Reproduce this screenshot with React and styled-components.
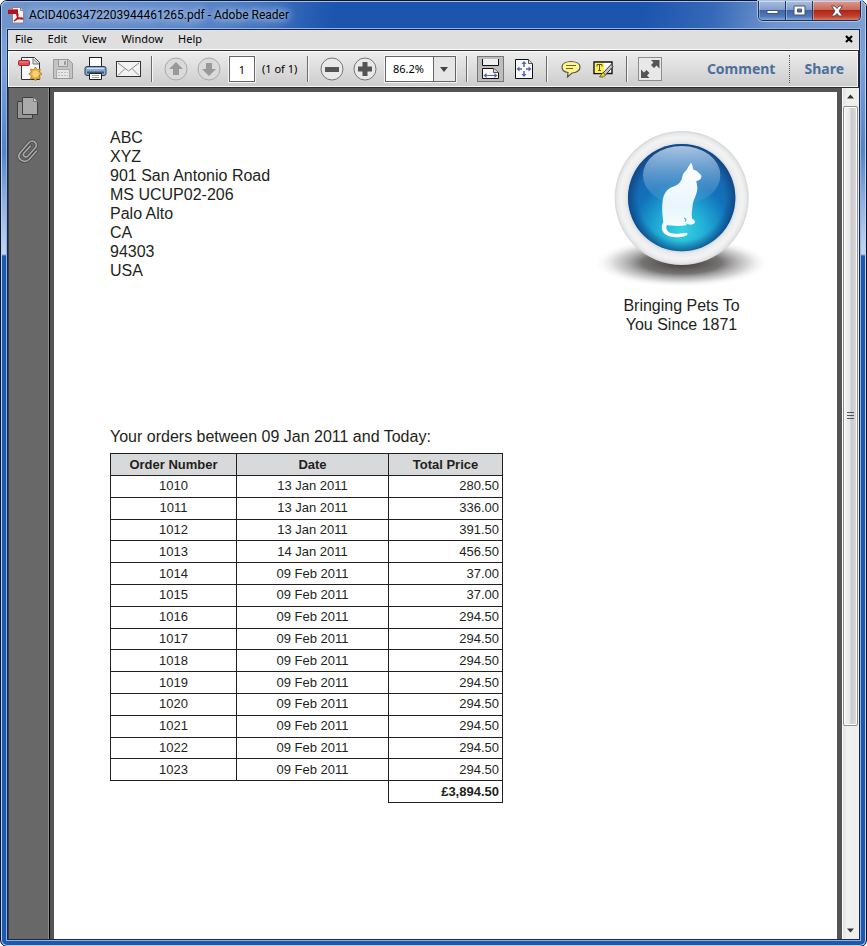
import React from "react";
import styled, { createGlobalStyle } from "styled-components";

const uiFont = `"Noto Sans", "Open Sans", sans-serif`;
const docFont = `"Liberation Sans", Arial, sans-serif`;

const GlobalStyle = createGlobalStyle`
  *, *::before, *::after { box-sizing: border-box; }
  body { margin: 0; background: #fff; }
  button, input, select { font: inherit; color: inherit; margin: 0; }
`;

const Frame = styled.div`
  display: flex;
  flex-direction: column;
  min-height: 100vh;
  padding: 0 6px 6px;
  border: 1px solid #07152e;
  border-radius: 7px;
  box-shadow: inset 0 0 0 1px #b9d2f2;
  font: 11px/20px ${uiFont};
  color: #000;
  background: linear-gradient(
    #6d93cd 0, #7ea3dc 60px, #5583c9 150px, #8fb0e0 200px, #c3d6f2 253px, #1c57b0 255px, #1c57b0 100%
  );
`;

const TitleBar = styled.header`
  display: flex;
  align-items: center;
  height: 28px;
  margin: 0 -6px;
  padding-left: 7px;
  border-radius: 6px 6px 0 0;
  box-shadow: inset 0 1px 0 #9fc0ee, inset 1px 0 0 #a9c6ee, inset -1px 0 0 #a9c6ee;
  background: linear-gradient(100deg, #7295cb 0, #5e88c8 190px, #3c6dba 270px, #1b55ae 330px, #1b55ae 74%, #3568b8 82%, #6f94cc 89%, #7f9fd2 100%);
`;

const WindowTitle = styled.h1`
  flex: 1;
  margin: 0;
  padding-left: 4px;
  font-family: Roboto, sans-serif;
  font-size: 12px;
  font-weight: 400;
  line-height: 20px;
  white-space: nowrap;
  text-shadow: 0 0 5px #a3bfe8, 0 0 9px #a3bfe8, 0 0 12px #a3bfe8, 0 0 16px #a3bfe8;
`;

const WindowControls = styled.div`
  display: flex;
  align-self: flex-start;
  margin-right: 5px;
  height: 20px;
  border: 1px solid #1b2f58;
  border-top: 0;
  border-radius: 0 0 5px 5px;
  box-shadow: 0 0 0 1px #a8c1e6;
  overflow: hidden;
`;

const ControlButton = styled.button`
  display: grid;
  place-items: center;
  width: ${(p) => (p.$close ? 47 : 27)}px;
  padding: 0;
  border: 0;
  border-right: ${(p) => (p.$close ? "0" : "1px solid #243c69")};
  box-shadow: inset 1px 0 0 #ffffff55, inset 0 1px 0 #ffffff77;
  background: ${(p) =>
    p.$close
      ? "linear-gradient(#dc9c90 0, #c9695a 45%, #ad2413 50%, #c0412d 80%, #d27a62 100%)"
      : "linear-gradient(#a9bfe0 0, #839fcd 45%, #3f65a6 50%, #5078b6 80%, #7fa5da 100%)"};
`;

const Client = styled.div`
  flex: 1;
  display: flex;
  flex-direction: column;
  border: 1px solid #16294d;
  box-shadow: 0 0 0 1px #8fb3e4;
  background: #686868;
`;

const MenuBar = styled.nav`
  display: flex;
  align-items: flex-start;
  height: 20px;
  padding-left: 2px;
  border-bottom: 1px solid #fff;
  background: #dfdfdf;
`;

const MenuItem = styled.button`
  height: 18px;
  padding: 0 5px;
  margin-right: 5px;
  border: 0;
  background: none;
  line-height: 18px;
`;

const CloseDoc = styled(MenuItem)`
  display: grid;
  place-items: center;
  margin-left: auto;
  margin-right: 1px;
`;

const Toolbar = styled.div`
  display: flex;
  align-items: center;
  height: 38px;
  padding-left: 5px;
  border: 1px solid #2b2b2b;
  border-left: 0;
  box-shadow: inset 0 1px 0 #fff, inset 1px 0 0 #fff, inset 0 -1px 0 #f4f4f4, inset -1px 0 0 #f4f4f4;
  background: linear-gradient(#ededed, #cccccc);
`;

const ToolButton = styled.button`
  display: grid;
  place-items: center;
  flex: none;
  width: 33px;
  height: 28px;
  padding: 0;
  border: 0;
  background: none;
`;

const Separator = styled.span`
  flex: none;
  width: 2px;
  height: 26px;
  margin: 0 6px;
  border-left: 1px solid #6b6b6b;
  border-right: 1px solid #f7f7f7;
`;

const PageInput = styled.input`
  width: 26px;
  height: 26px;
  margin: 0 0 0 4px;
  padding: 0;
  border: 1px solid #666;
  outline: 1px solid #f4f4f4;
  background: #fff;
  text-align: center;
`;

const PageCount = styled.span`
  width: 46px;
  padding-left: 7px;
  white-space: nowrap;
`;

const ZoomBox = styled.label`
  display: grid;
  grid-template-columns: 47px 22px;
  flex: none;
  height: 26px;
  margin: 0 4px;
  border: 1px solid #666;
  outline: 1px solid #f4f4f4;
  background: linear-gradient(90deg, #fff 47px, #666 47px, #666 48px, #e6e6e6 48px);
  & > * { grid-row: 1; }
`;

const ZoomSelect = styled.select`
  grid-column: 1 / 3;
  appearance: none;
  width: 69px;
  padding: 0 0 0 7px;
  border: 0;
  background: none;
`;

const ZoomArrow = styled.svg`
  grid-column: 2;
  place-self: center;
  pointer-events: none;
`;

const Actions = styled.div`
  display: flex;
  align-items: center;
  margin-left: auto;
`;

const ActionButton = styled.button`
  height: 28px;
  padding: 0 14px;
  border: 0;
  border-left: ${(p) => (p.$last ? "1px dotted #555" : "0")};
  background: none;
  color: #4c6f9c;
  font-size: 14px;
  font-weight: 700;
`;

const Workspace = styled.div`
  flex: 1;
  display: flex;
  background: #545454;
`;

const Sidebar = styled.aside`
  display: flex;
  flex-direction: column;
  align-items: center;
  gap: 15px;
  width: 42px;
  padding-top: 6px;
  padding-right: 2px;
  border-left: 1px solid #3e3e3e;
  border-right: 1px solid #000;
  box-shadow: inset -1px 0 0 #8c8c8c;
  background: #686868;
`;

const Page = styled.main`
  flex: 1;
  margin: 4px 5px 0 4px;
  padding: 28px 64px 136px 56px;
  background: #fff;
  color: #231f20;
  font: 16px/19px ${docFont};
`;

const Letterhead = styled.div`
  display: flex;
  justify-content: space-between;
  align-items: flex-start;
`;

const Address = styled.address`
  padding-top: 8px;
  font-style: normal;
  white-space: pre-line;
`;

const Brand = styled.figure`
  width: 183px;
  margin: 0;
  text-align: center;
  svg { display: block; }
`;

const Tagline = styled.figcaption`
  padding: 9px 24px 0;
`;

const Intro = styled.p`
  margin: 93px 0 7px;
`;

const OrderTable = styled.table`
  width: 393px;
  height: 350px;
  border-collapse: collapse;
  font-size: 13px;
  line-height: 15px;
`;

const Cell = styled.td`
  height: ${(p) => (p.$head ? "22px" : "auto")};
  padding: 0 3px 1px;
  width: ${(p) => p.$width || "auto"};
  border: 1px solid #231f20;
  text-align: ${(p) => p.$align || "center"};
  font-weight: ${(p) => (p.$bold ? 700 : 400)};
  background: ${(p) => (p.$head ? "#d8d9db" : "none")};
`;

const Blank = styled.td`
  padding: 0;
`;

const ScrollBar = styled.div`
  display: flex;
  flex-direction: column;
  width: 17px;
  border-left: 1px solid #fff;
  background: linear-gradient(90deg, #e3e3e3, #f0f0f0 4px, #eee);
`;

const ScrollButton = styled.button`
  display: grid;
  place-items: center;
  height: 17px;
  padding: 0;
  border: 0;
  background: none;
`;

const Track = styled.div`
  flex: 1;
  display: grid;
  grid-template-rows: 76fr 24fr;
`;

const Thumb = styled.div`
  display: grid;
  place-items: center;
  margin: 1px 1px 0 0;
  border: 1px solid #8f8f8f;
  border-radius: 2px;
  box-shadow: inset 0 0 0 1px #fafafa;
  background: linear-gradient(90deg, #f5f5f5, #e6e6e6 45%, #c9c9cc 55%, #dedee0);
`;

const PdfIcon = () => (
  <svg width="17" height="17" viewBox="0 0 17 17">
    <path d="M4.500 .5h8l3 3v12.500h-11z" fill="#f4f2f2" stroke="#8d8590" />
    <path d="M12.500.5v3h3" fill="#ccc" stroke="#8d8590" />
    <path d="M0 2h10v5H0z" fill="#b3131c" />
    <path d="M0 2h10v1H0z" fill="#d6575c" />
    <path d="M6 14c2-1 4-4 4-6.500 0-1-1.500-1-1.200.3.500 2.500 3 4.200 5.500 4.200 1 0 .5-1-.8-1-2.500 0-5 .8-7.500 3z" fill="none" stroke="#b9131d" strokeWidth="1.300" />
  </svg>
);

const MinimizeIcon = () => (
  <svg width="13" height="8" viewBox="0 0 13 8"><path d="M1 3.500h11v3H1z" fill="#fff" stroke="#47536b" /></svg>
);
const MaximizeIcon = () => (
  <svg width="13" height="11" viewBox="0 0 13 11"><path d="M1 1h11v9H1zM4.500 4v3h4V4z" fill="#fff" fillRule="evenodd" stroke="#47536b" /></svg>
);
const CloseIcon = () => (
  <svg width="14" height="12" viewBox="0 0 14 12"><path d="M1.500 1h3.500l2 2.500L9 1h3.500L9 6l3.500 5H9L7 8.500 5 11H1.500L5 6z" fill="#fff" stroke="#5b4d55" /></svg>
);

const CreatePdfIcon = () => (
  <svg width="24" height="24" viewBox="0 0 24 24">
    <path d="M3.500 .5h13l5 5V22.500H3.500z" fill="#fafafa" stroke="#333" />
    <path d="M15 1.500v5.500h6M15 1.500l6 6" fill="#ddd" stroke="#777" />
    <rect x=".5" y="3.500" width="11" height="5" rx="1" fill="#e64a50" stroke="#a52930" />
    <path d="M1.500 5h9" stroke="#f28d8f" />
    <path d="M17.500 10l1.800 2.700 3-.7-.7 3 2.400 2-2.500 1.500.7 3.200-3.200-.6-1.500 2.700-1.800-2.600-3 .7.600-3.200-2.600-1.800 2.500-1.800-.6-3 3.200.6z" fill="#efb240" stroke="#a97820" strokeWidth=".8" />
    <circle cx="17.500" cy="17" r="3" fill="#ffd779" />
  </svg>
);
const SaveIcon = () => (
  <svg width="22" height="22" viewBox="0 0 22 22" fill="#c4c4c4" stroke="#999">
    <path d="M1.500 1.500h15l4 4v15h-19z" />
    <path d="M6.500 2v6.500h9V2" fill="#dadada" /><path d="M12.500 3.500h1v3h-1z" fill="#999" />
    <path d="M4.500 20v-8.500h13V20" fill="#e6e6e6" stroke="#aaa" /><path d="M6 14.500h10M6 17.500h10" strokeDasharray="2 1" stroke="#bbb" />
  </svg>
);
const PrintIcon = () => (
  <svg width="23" height="24" viewBox="0 0 23 24">
    <rect x="5.500" y=".5" width="12" height="11" fill="#fff" stroke="#222" />
    <rect x="1" y="9.500" width="21" height="9" rx="2" fill="#86aad0" stroke="#2e4055" />
    <path d="M3 11.500h17" stroke="#d3e4f4" /><path d="M3 15.500h17" stroke="#3d5774" strokeWidth="2" />
    <path d="M5.500 16.500h12v6h-12z" fill="#fff" stroke="#222" /><path d="M8 18.500h7M8 20.500h7" stroke="#9aa" />
  </svg>
);
const MailIcon = () => (
  <svg width="25" height="18" viewBox="0 0 25 18">
    <rect x=".5" y="1.500" width="24" height="15" fill="#f2f2f2" stroke="#333" />
    <path d="M2 3l10.500 8L23 3M2 15.500l7-7M23 15.500l-7-7" fill="none" stroke="#8b8b8b" />
  </svg>
);
const CircleIcon = ({ d, active }) => (
  <svg width="24" height="24" viewBox="0 0 24 24">
    <circle cx="12" cy="12" r="11" fill={active ? "#e9e9e9" : "#dadada"} stroke={active ? "#777" : "#a9a9a9"} />
    <path d={d} fill={active ? "#555" : "#999"} />
  </svg>
);
const FitWidthIcon = () => (
  <svg width="27" height="26" viewBox="0 0 27 26">
    <rect x=".5" y=".5" width="26" height="25" fill="#bdbdbd" stroke="#777" />
    <path d="M5.500 3v6.500h16V3" fill="#f0f0f0" stroke="#111" />
    <path d="M5.500 22.500v-10h11l5 4v6z" fill="#f8f8f8" stroke="#111" />
    <path d="M16.500 12.500v4h5" fill="#ddd" stroke="#555" />
    <path d="M9 19.500h9" stroke="#5367a8" /><path d="M6.500 19.500l3-2.500v5zM20.500 19.500l-3-2.500v5z" fill="#5367a8" />
  </svg>
);
const FitPageIcon = () => (
  <svg width="18" height="20" viewBox="0 0 18 20">
    <path d="M.5.5h13l4 4v15H.5z" fill="#f7f7f7" stroke="#111" /><path d="M13.500.5v4h4" fill="#ddd" stroke="#555" />
    <path d="M9 5v3M9 12v3M4 10h3M11 10h3" stroke="#5367a8" strokeWidth="1.500" />
    <path d="M9 2l2.500 3h-5zM9 18l2.500-3h-5zM1.500 10l3-2.500v5zM16.500 10l-3-2.500v5z" fill="#5367a8" />
  </svg>
);
const NoteIcon = () => (
  <svg width="20" height="18" viewBox="0 0 20 18">
    <path d="M10 1.500c5 0 9 2 9 5.500s-3.500 6-8 6l-4.500 4 .5-4.500C3 12 1 10 1 7c0-3.500 4-5.500 9-5.500z" fill="#fff58a" stroke="#555" strokeWidth="1.200" />
    <path d="M5 5.500h10M5 8.500h7" stroke="#6b6534" />
  </svg>
);
const HighlightIcon = () => (
  <svg width="21" height="19" viewBox="0 0 21 19">
    <path d="M1 2h18v11.500H1z" fill="#fff" stroke="#111" strokeWidth="1.400" /><path d="M2 3h9v10H2z" fill="#fff250" />
    <path d="M4 6.500V4.500h5v2M6.500 5v6M5 10.500h3" fill="none" stroke="#5c561c" />
    <path d="M18 4.500l2 2-7.500 8.500-2.500-2z" fill="#c4c4c4" stroke="#333" /><path d="M10 12.500l2.500 2.500-2 2H6.500z" fill="#ebd934" stroke="#6b641c" />
  </svg>
);
const ExpandIcon = () => (
  <svg width="25" height="24" viewBox="0 0 25 24">
    <rect x=".5" y=".5" width="23" height="23" fill="#e8e8e8" stroke="#8d8d8d" />
    <path d="M21.500 3v8.500l-3-3L16 11l-3-3 2.500-2.500L13 3zM3 21v-8.500l3 3L8.500 13l3 3L9 18.500l2.500 2.500z" fill="#555" />
  </svg>
);
const PagesIcon = () => (
  <svg width="22" height="24" viewBox="0 0 22 24" fill="#aaa" stroke="#3f3f3f">
    <path d="M.5 5.500h15v17H.5z" fill="#969696" /><path d="M5.500 1.500h11l4 4v13h-15z" /><path d="M16.500 1.500v4h4" fill="#d5d5d5" stroke="#777" />
  </svg>
);
const ClipIcon = () => (
  <svg width="22" height="24" viewBox="0 0 22 24" fill="none" strokeLinecap="round">
    <path d="M19.500 12l-7.500 8.500c-5 4.500-13-.5-9-6.500L12 3.500c3.500-3.500 9.500.5 6.500 5l-7.500 8.500c-2.500 2.500-6-.5-4-3l6.500-7" stroke="#444" strokeWidth="3" />
    <path d="M19.500 12l-7.500 8.500c-5 4.500-13-.5-9-6.500L12 3.500c3.500-3.500 9.500.5 6.500 5l-7.500 8.500c-2.500 2.500-6-.5-4-3l6.500-7" stroke="#aaa" strokeWidth="1.600" />
  </svg>
);

const CatLogo = () => (
  <svg width="183" height="167" viewBox="0 0 549 501" role="img" aria-label="White cat on a blue button">
    <defs>
      <radialGradient id="shadow">
        <stop offset="0" stopColor="#3c3838" /><stop offset=".45" stopColor="#5f5b5b" stopOpacity=".85" />
        <stop offset=".75" stopColor="#999" stopOpacity=".4" /><stop offset="1" stopColor="#fff" stopOpacity="0" />
      </radialGradient>
      <radialGradient id="ring">
        <stop offset=".79" stopColor="#d3d6d9" /><stop offset=".84" stopColor="#ebeced" /><stop offset=".91" stopColor="#f3f3f4" /><stop offset=".97" stopColor="#e6e7e8" /><stop offset="1" stopColor="#d3d4d5" />
      </radialGradient>
      <radialGradient id="ball" cx=".5" cy=".8" r=".75">
        <stop offset="0" stopColor="#36d3e4" /><stop offset=".28" stopColor="#22b0d8" /><stop offset=".6" stopColor="#1173ba" /><stop offset="1" stopColor="#1c5fa6" />
      </radialGradient>
      <radialGradient id="edge">
        <stop offset=".8" stopColor="#0c3d7c" stopOpacity="0" /><stop offset="1" stopColor="#0c3774" stopOpacity=".65" />
      </radialGradient>
      <linearGradient id="gloss" x1="0" y1="0" x2="0" y2="1">
        <stop offset="0" stopColor="#c4daf0" stopOpacity=".85" /><stop offset="1" stopColor="#6ba3d8" stopOpacity=".15" />
      </linearGradient>
      <linearGradient id="fur" x1="0" y1="0" x2="0" y2="1">
        <stop offset="0" stopColor="#fff" /><stop offset=".6" stopColor="#e8f6fd" /><stop offset="1" stopColor="#fff" />
      </linearGradient>
    </defs>
    <ellipse cx="275" cy="428" rx="265" ry="74" fill="url(#shadow)" />
    <circle cx="275" cy="234" r="201" fill="url(#ring)" />
    <circle cx="275" cy="233" r="161" fill="url(#ball)" />
    <circle cx="275" cy="233" r="161" fill="url(#edge)" />
    <ellipse cx="275" cy="166" rx="116" ry="88" fill="url(#gloss)" />
    <path d="M303 128C308 134 308 142 310 149C318 151 324 154 327 160L334 166C335 172 333 178 327 181L319 183C320 193 324 203 321 214C318 228 310 240 308 255L305 282L306 296C313 298 317 303 314 310C307 316 295 315 290 310L289 316C268 319 246 318 231 315C226 324 231 335 242 339C258 344 276 339 291 338C294 342 291 346 287 347C266 354 240 353 226 343C213 333 213 319 220 307C217 286 215 264 218 241C221 221 231 207 247 201C260 197 270 191 275 178C277 168 279 160 286 154C292 149 296 137 303 128Z" fill="url(#fur)" />
    <path d="M282 294l6 3-2 8" fill="none" stroke="#2fb1cb" strokeWidth="3" />
  </svg>
);

const addressText = `ABC
XYZ
901 San Antonio Road
MS UCUP02-206
Palo Alto
CA
94303
USA`;

const orders = [
  ["1010", "13 Jan 2011", "280.50"],
  ["1011", "13 Jan 2011", "336.00"],
  ["1012", "13 Jan 2011", "391.50"],
  ["1013", "14 Jan 2011", "456.50"],
  ["1014", "09 Feb 2011", "37.00"],
  ["1015", "09 Feb 2011", "37.00"],
  ["1016", "09 Feb 2011", "294.50"],
  ["1017", "09 Feb 2011", "294.50"],
  ["1018", "09 Feb 2011", "294.50"],
  ["1019", "09 Feb 2011", "294.50"],
  ["1020", "09 Feb 2011", "294.50"],
  ["1021", "09 Feb 2011", "294.50"],
  ["1022", "09 Feb 2011", "294.50"],
  ["1023", "09 Feb 2011", "294.50"],
];

export default function App() {
  return (
    <>
      <GlobalStyle />
      <Frame>
        <TitleBar>
          <PdfIcon />
          <WindowTitle>ACID4063472203944461265.pdf - Adobe Reader</WindowTitle>
          <WindowControls>
            <ControlButton aria-label="Minimize"><MinimizeIcon /></ControlButton>
            <ControlButton aria-label="Maximize"><MaximizeIcon /></ControlButton>
            <ControlButton $close aria-label="Close"><CloseIcon /></ControlButton>
          </WindowControls>
        </TitleBar>
        <Client>
          <MenuBar>
            {["File", "Edit", "View", "Window", "Help"].map((m) => <MenuItem key={m}>{m}</MenuItem>)}
            <CloseDoc aria-label="Close document">
              <svg width="8" height="8" viewBox="0 0 8 8"><path d="M1 1l6 6M7 1L1 7" stroke="#000" strokeWidth="2.200" /></svg>
            </CloseDoc>
          </MenuBar>
          <Toolbar>
            <ToolButton aria-label="Create PDF"><CreatePdfIcon /></ToolButton>
            <ToolButton aria-label="Save"><SaveIcon /></ToolButton>
            <ToolButton aria-label="Print"><PrintIcon /></ToolButton>
            <ToolButton aria-label="Email"><MailIcon /></ToolButton>
            <Separator />
            <ToolButton aria-label="Previous page"><CircleIcon d="M12 5l7 7h-4v6H9v-6H5z" /></ToolButton>
            <ToolButton aria-label="Next page"><CircleIcon d="M12 19l-7-7h4V6h6v6h4z" /></ToolButton>
            <PageInput aria-label="Page number" defaultValue="1" />
            <PageCount>(1 of 1)</PageCount>
            <Separator />
            <ToolButton aria-label="Zoom out"><CircleIcon active d="M5 10h14v5H5z" /></ToolButton>
            <ToolButton aria-label="Zoom in"><CircleIcon active d="M9.500 5h5v4.500H19v5h-4.500V19h-5v-4.500H5v-5h4.500z" /></ToolButton>
            <ZoomBox>
              <ZoomSelect aria-label="Zoom level" defaultValue="86.2%"><option>86.2%</option><option>100%</option></ZoomSelect>
              <ZoomArrow width="8" height="5" viewBox="0 0 8 5"><path d="M0 0h8L4 5z" fill="#444" /></ZoomArrow>
            </ZoomBox>
            <Separator />
            <ToolButton aria-label="Fit width"><FitWidthIcon /></ToolButton>
            <ToolButton aria-label="Fit page"><FitPageIcon /></ToolButton>
            <Separator />
            <ToolButton aria-label="Add note"><NoteIcon /></ToolButton>
            <ToolButton aria-label="Highlight text"><HighlightIcon /></ToolButton>
            <Separator />
            <ToolButton aria-label="Read mode"><ExpandIcon /></ToolButton>
            <Actions>
              <ActionButton>Comment</ActionButton>
              <ActionButton $last>Share</ActionButton>
            </Actions>
          </Toolbar>
          <Workspace>
            <Sidebar>
              <ToolButton aria-label="Page thumbnails"><PagesIcon /></ToolButton>
              <ToolButton aria-label="Attachments"><ClipIcon /></ToolButton>
            </Sidebar>
            <Page>
              <Letterhead>
                <Address>{addressText}</Address>
                <Brand>
                  <CatLogo />
                  <Tagline>Bringing Pets To You Since 1871</Tagline>
                </Brand>
              </Letterhead>
              <Intro>Your orders between 09 Jan 2011 and Today:</Intro>
              <OrderTable>
                <thead>
                  <tr>
                    <Cell as="th" $head $bold $width="126px">Order Number</Cell>
                    <Cell as="th" $head $bold $width="152px">Date</Cell>
                    <Cell as="th" $head $bold>Total Price</Cell>
                  </tr>
                </thead>
                <tbody>
                  {orders.map(([number, date, price]) => (
                    <tr key={number}>
                      <Cell>{number}</Cell>
                      <Cell>{date}</Cell>
                      <Cell $align="right">{price}</Cell>
                    </tr>
                  ))}
                  <tr>
                    <Blank colSpan={2} />
                    <Cell $align="right" $bold>£3,894.50</Cell>
                  </tr>
                </tbody>
              </OrderTable>
            </Page>
            <ScrollBar>
              <ScrollButton aria-label="Scroll up"><svg width="8" height="5" viewBox="0 0 8 5"><path d="M0 4.500h7L3.500.5z" fill="#333" /></svg></ScrollButton>
              <Track>
                <Thumb><svg width="7" height="8" viewBox="0 0 7 8"><path d="M0 .5h7M0 3.500h7M0 6.500h7" stroke="#555" /></svg></Thumb>
              </Track>
              <ScrollButton aria-label="Scroll down"><svg width="8" height="5" viewBox="0 0 8 5"><path d="M0 .5h7L3.500 4.500z" fill="#333" /></svg></ScrollButton>
            </ScrollBar>
          </Workspace>
        </Client>
      </Frame>
    </>
  );
}
